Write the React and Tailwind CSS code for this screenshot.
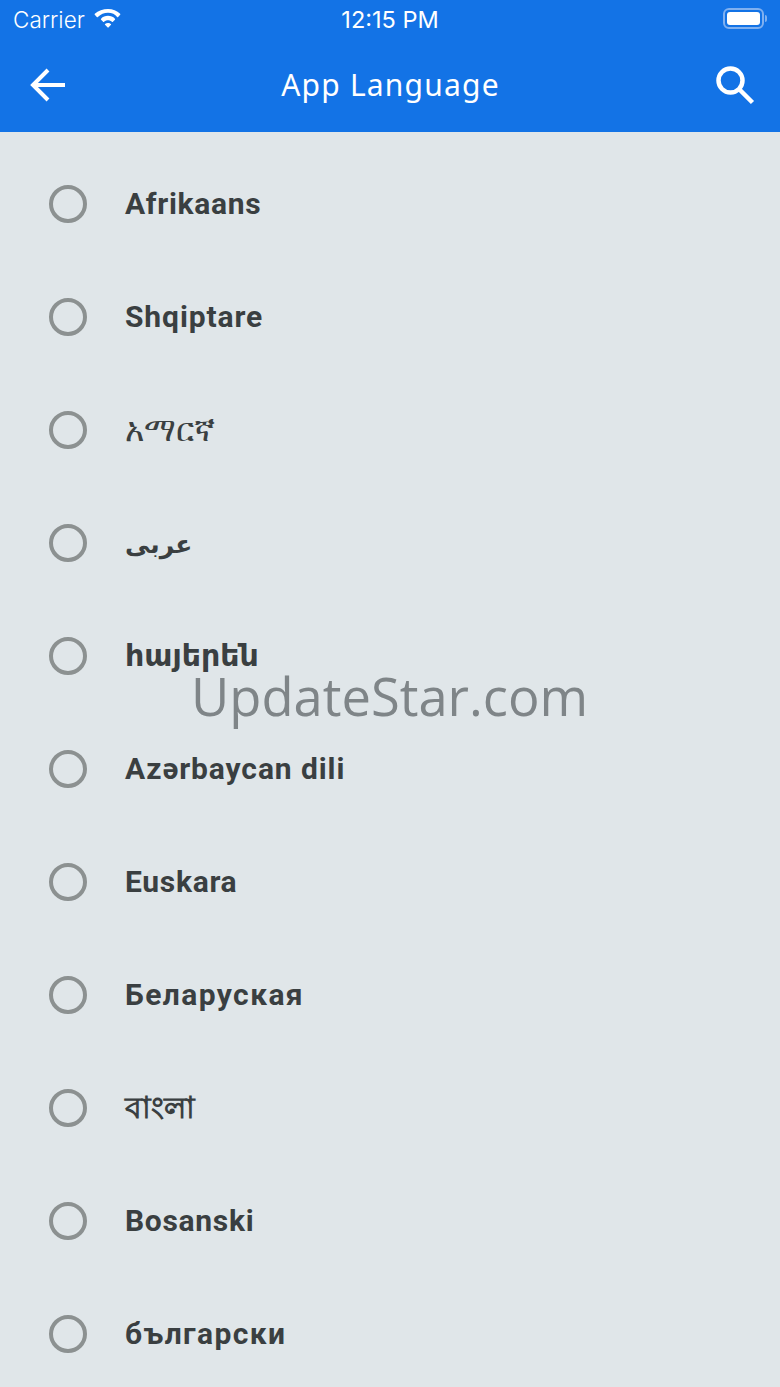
const latin = "text-[30px] font-bold tracking-[0.9px]";
const cyrillic = "text-[30px] font-bold tracking-[1.4px]";

const languages = [
  { label: "Afrikaans", className: "text-[30px] font-bold tracking-[0.7px]" },
  { label: "Shqiptare", className: latin },
  { label: "አማርኛ", className: "text-[33px] font-normal" },
  { label: "عربى", className: "mt-[4px] text-[25px] font-bold" },
  { label: "հայերեն", className: "text-[30px] font-bold" },
  { label: "Azərbaycan dili", className: latin },
  { label: "Euskara", className: "text-[30px] font-bold tracking-[0.7px]" },
  { label: "Беларуская", className: cyrillic },
  { label: "বাংলা", className: "text-[30px] font-bold" },
  { label: "Bosanski", className: "text-[30px] font-bold tracking-[0.7px]" },
  { label: "български", className: cyrillic },
];

const StatusBar = () => (
  <div className="flex h-10 items-center justify-between px-[13px] font-['Inter',sans-serif] text-white">
    <div className="flex flex-1 items-center gap-[7px]">
      <span className="text-[22.500px] font-light leading-none">Carrier</span>
      <svg width="32" height="26" viewBox="0 0 30 22" fill="white" className="-mt-[4px]">
        <path d="M15 2.500c4.400 0 8.400 1.700 11.400 4.500.3.300.3.700 0 1l-1.900 2c-.3.300-.7.300-1 0C21.900 7.500 18.600 6.100 15 6.100S8.100 7.500 5.500 10c-.3.300-.7.300-1 0l-1.900-2c-.3-.3-.3-.7 0-1C5.600 4.200 10.600 2.500 15 2.500z" />
        <path d="M15 9c2.500 0 4.800 1 6.500 2.600.3.300.3.700 0 1l-1.900 1.900c-.3.300-.7.300-1 0-1-.9-2.200-1.400-3.600-1.400s-2.600.5-3.600 1.400c-.3.300-.7.300-1 0l-1.900-1.900c-.3-.3-.3-.7 0-1C10.200 10 12.500 9 15 9z" />
        <path d="M15 15.600c1.100 0 2.100.4 2.800 1.100.2.200.2.500 0 .7L15.400 20c-.2.200-.5.200-.7 0l-2.500-2.600c-.2-.2-.2-.5 0-.7.700-.7 1.700-1.100 2.800-1.100z" />
      </svg>
    </div>
    <span className="text-[23.500px] font-normal leading-none">12:15 PM</span>
    <div className="-mt-[3px] flex flex-1 items-center justify-end gap-[1px]">
      <div className="h-[21px] w-[41px] rounded-[6px] border-2 border-[#7fb0f0] p-[2px]">
        <div className="h-full w-full rounded-[3px] bg-white" />
      </div>
      <div className="h-[7px] w-[2px] rounded-r-sm bg-[#7fb0f0]" />
    </div>
  </div>
);

const AppBar = () => (
  <div className="flex h-[92px] items-center justify-between pb-[2px] pl-[30px] pr-[25px] text-white">
    <svg width="36" height="34" viewBox="0 0 36 34" fill="none" stroke="white" strokeWidth="4">
      <path d="M35 17H4M18 2 3 17l15 15" />
    </svg>
    <h1 className="font-['Noto_Sans',sans-serif] text-[30px] font-normal leading-none tracking-[1.200px]">
      App Language
    </h1>
    <svg width="40" height="40" viewBox="0 0 40 40" fill="none" stroke="white" strokeWidth="4.500">
      <circle cx="15.500" cy="15.500" r="12" />
      <path d="M24 24l13.500 13.500" />
    </svg>
  </div>
);

const LanguageRow = ({ label, className }) => (
  <div className="flex h-[113px] items-center pl-[49px]">
    <div className="h-[38px] w-[38px] shrink-0 rounded-full border-[4px] border-[#8c9191]" />
    <span className={`ml-[38px] leading-none text-[#3a3f41] ${className}`}>{label}</span>
  </div>
);

export default function App() {
  return (
    <div className="relative h-[1387px] w-[780px] overflow-hidden bg-[#e0e6e9] font-['Roboto','Noto_Sans','DejaVu_Sans',sans-serif]">
      <header className="bg-[#1373e6]">
        <StatusBar />
        <AppBar />
      </header>

      <div className="pt-[15px]">
        {languages.map((item) => (
          <LanguageRow key={item.label} label={item.label} className={item.className} />
        ))}
      </div>

      {/* watermark over the list */}
      <div className="absolute left-[191px] top-[661px] font-['Open_Sans',sans-serif] text-[52.500px] font-normal leading-[70px] text-[#7f8588]">
        UpdateStar.com
      </div>
    </div>
  );
}
